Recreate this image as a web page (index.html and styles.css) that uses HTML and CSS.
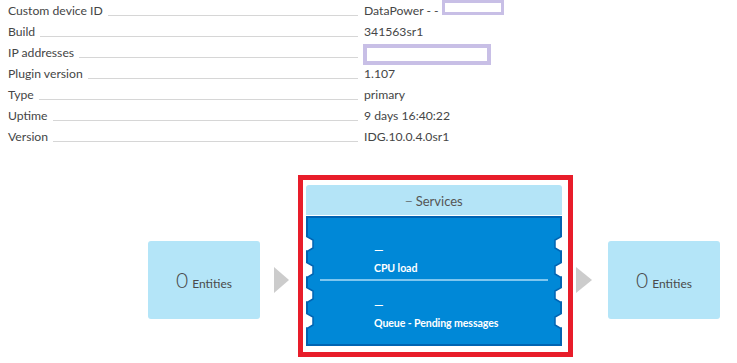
FILE: index.html
```html
<!DOCTYPE html>
<html lang="en">
<head>
    <meta charset="UTF-8">
    <meta name="viewport" content="width=device-width, initial-scale=1.0">
    <title>Custom device | DataPower</title>
    <link rel="stylesheet" href="styles.css">
</head>
<body>

<div class="props">
    <div class="row">
        <div class="key"><span>Custom device ID</span><span class="leader"></span></div>
        <div class="val">DataPower - - <span class="redact redact-short"></span></div>
    </div>
    <div class="row">
        <div class="key"><span>Build</span><span class="leader"></span></div>
        <div class="val">341563sr1</div>
    </div>
    <div class="row">
        <div class="key"><span>IP addresses</span><span class="leader"></span></div>
        <div class="val"><span class="redact redact-long"></span></div>
    </div>
    <div class="row">
        <div class="key"><span>Plugin version</span><span class="leader"></span></div>
        <div class="val">1.107</div>
    </div>
    <div class="row">
        <div class="key"><span>Type</span><span class="leader"></span></div>
        <div class="val">primary</div>
    </div>
    <div class="row">
        <div class="key"><span>Uptime</span><span class="leader"></span></div>
        <div class="val">9 days 16:40:22</div>
    </div>
    <div class="row">
        <div class="key"><span>Version</span><span class="leader"></span></div>
        <div class="val">IDG.10.0.4.0sr1</div>
    </div>
</div>

<div class="flow">
    <div class="entities"><span class="count">0</span> Entities</div>
    <div class="arrow arrow-in"></div>

    <div class="highlight">
        <div class="group">
            <div class="group-head"><span class="collapse">&mdash;</span> Services</div>
            <div class="group-body">
                <!-- puzzle edges of the process group -->
                <svg class="edge edge-left" width="9" height="130" viewBox="0 0 9 130">
                    <g fill="#fff" stroke="#0064b2" stroke-width="1.5" stroke-linejoin="miter">
                        <polygon points="-2,19 7,24 7,32 2,35 -2,35"/>
                        <polygon points="-2,45 7,50 7,58 2,61 -2,61"/>
                        <polygon points="-2,70 7,75 7,83 2,86 -2,86"/>
                        <polygon points="-2,96 7,101 7,109 2,112 -2,112"/>
                    </g>
                </svg>
                <svg class="edge edge-right" width="9" height="130" viewBox="0 0 9 130">
                    <g fill="#fff" stroke="#0064b2" stroke-width="1.5" stroke-linejoin="miter">
                        <polygon points="11,19 2,24 2,32 7,35 11,35"/>
                        <polygon points="11,45 2,50 2,58 7,61 11,61"/>
                        <polygon points="11,70 2,75 2,83 7,86 11,86"/>
                        <polygon points="11,96 2,101 2,109 7,112 11,112"/>
                    </g>
                </svg>

                <div class="metric">
                    <div class="dash">&mdash;</div>
                    <div class="name">CPU load</div>
                </div>
                <div class="sep"></div>
                <div class="metric">
                    <div class="dash">&mdash;</div>
                    <div class="name">Queue - Pending messages</div>
                </div>
            </div>
        </div>
    </div>

    <div class="arrow arrow-out"></div>
    <div class="entities"><span class="count">0</span> Entities</div>
</div>

</body>
</html>
```

FILE: styles.css
```css
* {
    margin: 0;
    padding: 0;
    box-sizing: border-box;
}

body {
    font-family: Lato, "Open Sans", sans-serif;
    font-size: 12.2px;
    color: #454646;
    background: #fff;
    width: 737px;
    height: 363px;
    overflow: hidden;
}

/* Property list */
.props {
    padding-left: 8px;
}

.row {
    display: grid;
    grid-template-columns: 350px 1fr;
    column-gap: 6px;
    height: 21px;
    line-height: 22px;
}

.key {
    display: flex;
    white-space: nowrap;
}

.leader {
    flex: 1;
    height: 1px;
    margin: 15px 0 0 5px;
    background: #d6d6d6;
}

.val {
    white-space: nowrap;
    display: flex;
    align-items: center;
}

.redact {
    display: inline-block;
    background: #fff;
    border-style: solid;
    border-color: #c8bfe6;
}

.redact-short {
    width: 62px;
    height: 15px;
    border-width: 3px;
    margin-left: 3px;
    margin-top: -7px;
}

.redact-long {
    width: 128px;
    height: 21px;
    border-width: 4px;
    margin-left: -1px;
    margin-top: 2px;
}

/* Process flow */
.flow {
    display: flex;
    align-items: flex-start;
    margin-top: 28px;
    padding-left: 148px;
}

.entities {
    width: 112px;
    height: 78px;
    margin-top: 66px;
    background: #b4e5f8;
    border-radius: 3px;
    display: flex;
    align-items: baseline;
    justify-content: center;
    padding-top: 28px;
    font-size: 12px;
    color: #4a4a4a;
}

.count {
    font-size: 21px;
    font-weight: 300;
    margin-right: 4px;
    line-height: 1;
}

.arrow {
    width: 0;
    height: 0;
    margin-top: 92px;
    border-top: 13px solid transparent;
    border-bottom: 13px solid transparent;
    border-left: 15px solid #cccccc;
}

.arrow-in {
    margin-left: 14px;
    margin-right: 9px;
}

.arrow-out {
    margin-left: 3px;
    margin-right: 16px;
    border-left-width: 16px;
}

.highlight {
    width: 275px;
    height: 182px;
    border: 5px solid #e81d2a;
    padding: 5px 6px 6px 3px;
}

.group-head {
    height: 30px;
    padding-top: 3px;
    line-height: 27px;
    text-align: center;
    background: #b4e4f7;
    border-radius: 3px 3px 0 0;
    color: #555;
    font-size: 13px;
}

.collapse {
    position: relative;
    top: -2px;
    font-size: 9px;
    vertical-align: middle;
}

.group-body {
    position: relative;
    height: 130px;
    margin-top: 1px;
    background: #0088d7;
    border: 2px solid #0064b2;
    padding: 20px 0 0 0;
    color: #fff;
}

.edge {
    position: absolute;
    top: -2px;
}

.edge-left {
    left: -2px;
}

.edge-right {
    right: -2px;
}

.metric {
    padding-left: 66px;
}

.dash,
.name {
    height: 20px;
    line-height: 20px;
}

.dash {
    font-size: 12px;
    font-weight: 700;
    padding-top: 2px;
}

.name {
    font-size: 10.6px;
    font-weight: 700;
    letter-spacing: -0.1px;
}

.sep {
    height: 2px;
    margin: 1px 12px 12px 12px;
    background: #7ec6ef;
}
```
